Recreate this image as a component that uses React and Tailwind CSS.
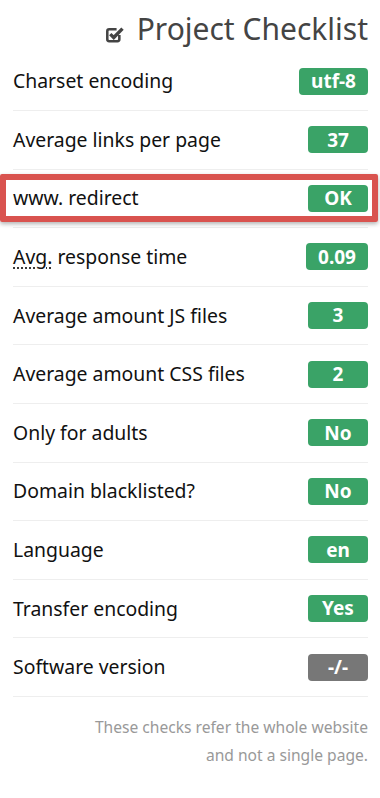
import React from "react";

const rows = [
  { label: "Charset encoding", value: "utf-8" },
  { label: "Average links per page", value: "37" },
  { label: "www. redirect", value: "OK", highlight: true },
  { label: "Avg. response time", value: "0.09", abbr: true },
  { label: "Average amount JS files", value: "3" },
  { label: "Average amount CSS files", value: "2" },
  { label: "Only for adults", value: "No" },
  { label: "Domain blacklisted?", value: "No" },
  { label: "Language", value: "en" },
  { label: "Transfer encoding", value: "Yes" },
  { label: "Software version", value: "-/-", gray: true },
];

function CheckIcon() {
  return (
    <svg width="18" height="19" viewBox="0 0 17 18" className="mr-[13px] mt-[15px] shrink-0">
      <path
        d="M12.6 10.5 V14.5 a1.8 1.8 0 0 1 -1.8 1.8 H3 a1.8 1.8 0 0 1 -1.8 -1.8 V6.8 a1.8 1.8 0 0 1 1.8 -1.8 H10"
        fill="none"
        stroke="#444"
        strokeWidth="2.4"
      />
      <path d="M4 9.6 L7.3 12.8 L15.6 4.4" fill="none" stroke="#444" strokeWidth="3.2" strokeLinejoin="miter" />
    </svg>
  );
}

export default function App() {
  return (
    <div className="w-[380px] min-h-[798px] bg-white pl-[13px] pr-[12px]" style={{ fontFamily: '"Noto Sans", "Open Sans", sans-serif' }}>
      <div className="h-[52.4px] flex justify-end items-start pt-[9px]">
        <div className="flex items-start">
          <CheckIcon />
          <span className="text-[30px] leading-[40px] text-[#444]">Project Checklist</span>
        </div>
      </div>
      <div>
        {rows.map((r, i) => (
          <div key={i} className="relative h-[58.6px] border-b border-[#eeeeee] flex items-center justify-between">
            {r.highlight && (
              <div className="absolute left-[-13px] right-[-10px] top-[4px] bottom-[5px] border-[6px] border-[#d9534f] rounded-[2px] shadow-[0_2px_4px_rgba(0,0,0,0.3)]" />
            )}
            <span className="relative text-[19.4px] leading-[26px] text-[#111]">
              {r.abbr ? (
                <>
                  <span className="underline decoration-dotted decoration-[#333] underline-offset-[4px]">Avg.</span> response time
                </>
              ) : (
                r.label
              )}
            </span>
            <span
              className={`relative h-[27px] min-w-[60px] px-[12px] rounded-[4px] flex items-center justify-center text-white font-bold text-[19px] ${
                r.gray ? "bg-[#777777]" : "bg-[#3aa367]"
              }`}
            >
              {r.value}
            </span>
          </div>
        ))}
      </div>
      <div className="pt-[16px] text-right text-[15.6px] leading-[28px] text-[#999]">
        These checks refer the whole website
        <br />
        and not a single page.
      </div>
    </div>
  );
}
